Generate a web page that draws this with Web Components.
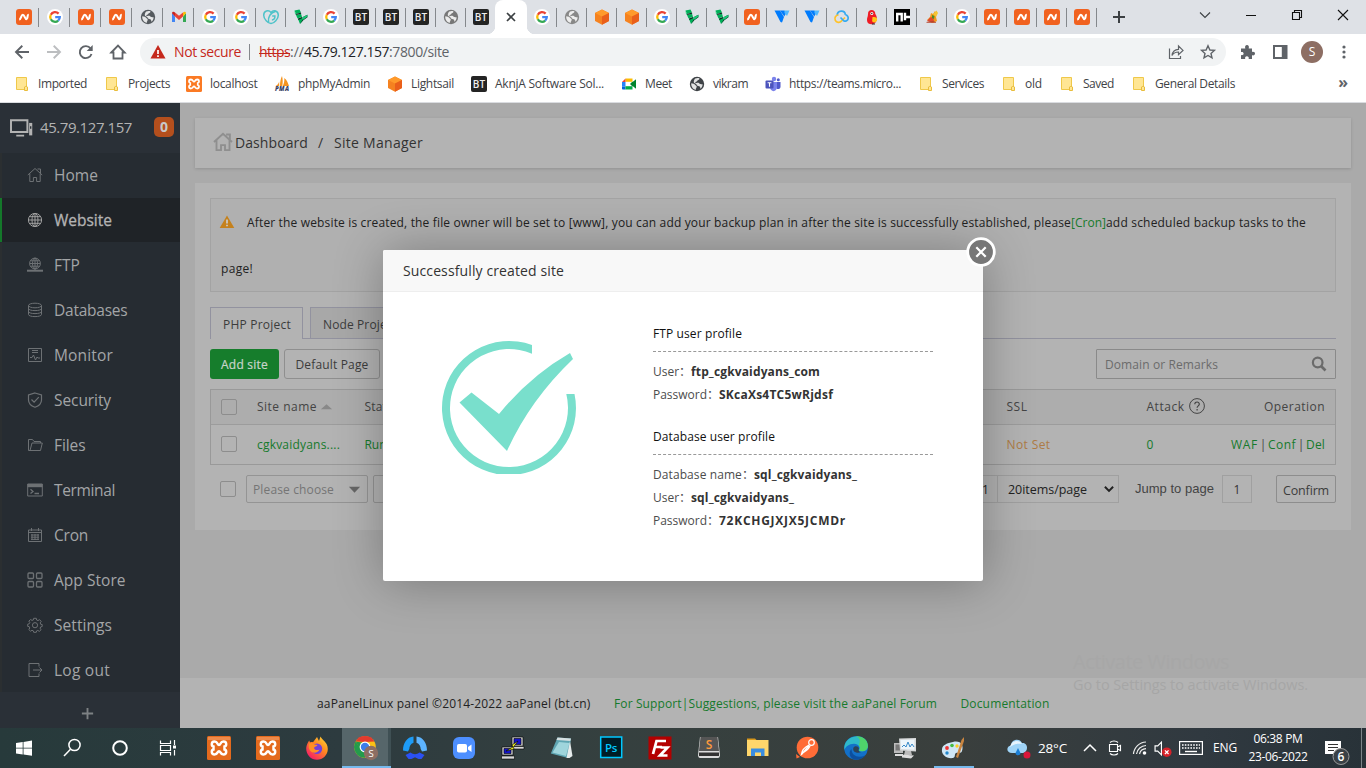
<!DOCTYPE html>
<html lang="en">
<head>
<meta charset="utf-8">
<title>aaPanel</title>
<style>
html,body{margin:0;height:768px;overflow:hidden}
body{font-family:"Open Sans","Noto Sans CJK SC",sans-serif;font-size:12px;color:#222;background:#fff}
desktop-screen{display:flex}
</style>
</head>
<body>
<desktop-screen></desktop-screen>
<script>
const ICONS = {
  ncheap:'<rect width="16" height="16" rx="3" fill="#f1611f"/><path d="M3.200 10.400C5.400 10.400 5 5.800 6.800 5.800S8.900 10.200 10.500 10.200 10.800 5.800 12.800 5.800" fill="none" stroke="#fff" stroke-width="2.100"/>',
  google:'<circle cx="8" cy="8" r="8" fill="#fff"/><g fill="none" stroke-width="2.300"><path d="M11.600 4.600A4.800 4.800 0 0 0 3.800 5.700" stroke="#ea4335"/><path d="M3.800 5.700A4.800 4.800 0 0 0 3.800 10.300" stroke="#fbbc05"/><path d="M3.800 10.300A4.800 4.800 0 0 0 11.200 11.600" stroke="#34a853"/><path d="M11.200 11.600A4.800 4.800 0 0 0 12.800 8.100H8.200" stroke="#4285f4"/></g>',
  globe:'<circle cx="8" cy="8" r="7.200" fill="currentColor"/><path d="M2.300 7.200c2 .2 3.200.5 3.800 1.600.5 1 1.700.8 1.600 2-.1 1.200-.9 1.500-1 3.100-2.700-.6-4.900-3.500-4.400-6.700zM6.200 2.600c1.800-.8 3.300-.6 4.300-.1-.2 1-.9 1.600-1.900 1.900-.8.3-.4 1.200-1.500 1.300s-1.100 1.100-.2 1.300c1.200.2 2.400-.6 3.200.3s1.500.9 3.500.9c0 2.300-1 3.700-2.200 4.600-.2-1.400-.3-2.300-1.300-2.500-1.300-.3-2.200-.6-2.600-1.700C7.100 7.500 6 7.600 5 6.700c-.6-.7 0-2.800 1.200-4.100z" fill="#fff" opacity=".85"/>',
  gmail:'<path d="M1 4v9h3V7.500z" fill="#4285f4"/><path d="M15 4v9h-3V7.500z" fill="#34a853"/><path d="M1 4.200L4 7.600V3.400C2.400 2.300 1 3 1 4.200z" fill="#c5221f"/><path d="M15 4.200L12 7.600V3.400c1.600-1.100 3-.4 3 .8z" fill="#fbbc04"/><path d="M4 3.400l4 3.300 4-3.300v4.200l-4 3.300-4-3.300z" fill="#ea4335"/>',
  godaddy:'<g fill="none" stroke="#4fc3c9" stroke-width="1.500"><path d="M8 3.500C5.500.4.700 1.800.7 6.200.7 10 5 14.300 8 14.600c3-.3 7.300-4.600 7.300-8.400C15.300 1.800 10.500.4 8 3.500z"/><path d="M12.800 2.200C7.500 3.500 4.600 8 5.600 13.300M9.200 7h2.700c.2 2.800-1.200 3.900-3 3.900"/></g>',
  linode:'<path d="M1.500 1.500l5-1 1.500 3-5 1.500zM3 6l5-1.200 1 3-4.500 1.700zM5 10l4-1.600 1 3.200L7 15z" fill="#00b159"/><path d="M3 5l5-1.400.2 1.200L3.200 6zM5 9.600L9 8l.4 1-4 2zM7 15l3-3.400 4.500-3.300-.2-2.600L10 8l-.6 3z" fill="#0c2e23"/><path d="M1.500 1.500L3 5v1L2 5zM9 8.500l5.400-2.800v2L10 11z" fill="#1cc777"/>',
  bt:'<rect width="16" height="16" rx="2" fill="#242424"/><text x="8" y="11.800" font-size="10" font-weight="600" text-anchor="middle" fill="#eee" font-family="Open Sans" textLength="12.500">BT</text>',
  cube:'<path d="M8 .5l7 3.500v8l-7 3.700L1 12V4z" fill="#f58220"/><path d="M8 .5L15 4 8 7.500 1 4z" fill="#ff9a2a"/><path d="M15 4v8l-7 3.700V7.500z" fill="#ea5f1a"/>',
  vultr:'<path d="M.5 1.500h5.500L10 8l-2 5.500-1.500-.5z" fill="#007bfc"/><path d="M6 1.500h4.500l1.700 2.400-1.900 3.600z" fill="#007bfc"/><path d="M10.500 1.500h5L13 7l-2.500-2.900z" fill="#51b9ff"/>',
  cloudlink:'<g fill="none" stroke-width="1.700"><path d="M3.200 6.500C3.200 1 10.900.8 11.400 5.800" stroke="#36aaf0"/><path d="M4.500 6A3.700 3.700 0 1 0 7.500 12L11 8.500" stroke="#ffc229"/><path d="M6.500 8.500L10 12a3.200 3.200 0 1 0 1.500-6.200" stroke="#36aaf0"/></g>',
  parrot:'<path d="M7.500 1c2.600 0 4 1.800 3.800 4 2.200 2.600 2 6.500-.2 9-2 2-7.600 2-8-2C2.600 9 4 8 4 5S5.600 1 7.500 1z" fill="#ee1c25"/><path d="M8.500 8c3-.5 5 .5 4.600 3-.5 2.500-4 3.500-5 1z" fill="#ffc417"/><circle cx="7.800" cy="4.500" r="1.500" fill="#fff"/><circle cx="7.800" cy="4.500" r=".7" fill="#222"/><path d="M8 15h3" stroke="#333"/>',
  nc:'<rect width="16" height="16" fill="#000"/><path d="M3.200 12.500V5h4.500v7.500M11 3.800v7.400M11 8h5" fill="none" stroke="#fff" stroke-width="2.400"/>',
  beach:'<path d="M3 11L6 8l1-4 2 1 2-3 1.500 3-.5 3 1 4-4 2z" fill="#f29a1c"/><path d="M9 5l3.500-3.500L14 4l-2 4z" fill="#f4c534"/><path d="M3 12l3-3.500L9 8l1 4-2 1.500z" fill="#e04a2f"/><path d="M8 6l2.500 1-.5 3L8 9z" fill="#4a8c2a"/><path d="M2 13l7-1 3 1v.8H3z" fill="#b5432c"/>',
  close:'<path d="M4 4l8 8M12 4l-8 8" stroke="currentColor" stroke-width="1.700"/>',
  plus:'<path d="M8 2v12M2 8h12" stroke="currentColor" stroke-width="2"/>',
  chev:'<path d="M3 5.500l5 5 5-5" fill="none" stroke="currentColor" stroke-width="1.100"/>',
  min:'<path d="M3 8.500h10" stroke="#111"/>',
  max:'<path d="M3.500 5.500h7v7h-7zM5.500 5.500v-2h7v7h-2" fill="none" stroke="#111" stroke-width="1.100"/>',
  wclose:'<path d="M3 3l10 10M13 3L3 13" stroke="#111" stroke-width="1.100"/>',
  back:'<path d="M15 8H2.500M8.300 1.800L2 8l6.300 6.200" fill="none" stroke="currentColor" stroke-width="1.900"/>',
  fwd:'<path d="M1 8h12.500M7.700 1.800L14 8l-6.300 6.200" fill="none" stroke="currentColor" stroke-width="1.900"/>',
  reload:'<path d="M13.500 10A6 6 0 1 1 12.600 4.500L13.500 5.700" fill="none" stroke="currentColor" stroke-width="1.900"/><path d="M14.700 1v6h-6z" fill="currentColor"/>',
  home:'<path d="M1.300 8.500L8 1.600l6.700 6.900H12.500v6h-9v-6z" fill="none" stroke="currentColor" stroke-width="1.800"/>',
  danger:'<path d="M8 1l7.500 13.500H.5z" fill="#c5281c"/><path d="M8 6v4M8 11.200v1.800" stroke="#fff" stroke-width="1.700"/>',
  share:'<path d="M1.500 4.500v10h11V12M4 11.500c.6-4 3.200-6 6.500-6.100V2L15 6.400l-4.500 4.300V8C7.500 8 5.500 9 4 11.500z" fill="none" stroke="currentColor" stroke-width="1.200"/>',
  star:'<path d="M8 1.800l1.900 4.200 4.500.4-3.400 3 1 4.400L8 11.500l-4 2.300 1-4.400-3.400-3 4.500-.4z" fill="none" stroke="currentColor" stroke-width="1.400"/>',
  puzzle:'<path d="M1 4.500h4.300C4.600 2.400 5.500 1 7 1s2.400 1.400 1.700 3.500H12v3.400c2-.5 3 .4 3 1.700s-1 2.200-3 1.700V15H8.700c.4-1.700-.4-2.700-1.800-2.700S4.800 13.300 5.200 15H1v-3.900c1.700.3 2.600-.4 2.600-1.600S2.700 7.700 1 8z" fill="currentColor"/>',
  panel:'<path d="M2 2h12.500v12H2z" fill="none" stroke="currentColor" stroke-width="2"/><path d="M9.800 2h4.700v12H9.800z" fill="currentColor"/>',
  dots:'<g fill="currentColor"><circle cx="8" cy="3" r="1.600"/><circle cx="8" cy="8" r="1.600"/><circle cx="8" cy="13" r="1.600"/></g>',
  folder:'<path d="M2.500 1.500h10v12h-10z" fill="#ffe694" stroke="#efc84a"/><path d="M10.500 11v3.500h3v-3.500c-.5-.8-2-.8-3 0z" fill="#ffe694" stroke="#e9bd3c"/>',
  xampp:'<rect width="16" height="16" rx="1.500" fill="#fb7a24"/><path d="M4.800 3.500c-2.400 0-2.300 3-.6 3.500v2c-1.700.5-1.800 3.500.6 3.500s2-2.200 3.200-2.200.8 2.200 3.200 2.200 2.300-3 .6-3.500V7c1.700-.5 1.800-3.500-.6-3.500S9.200 5.700 8 5.700 7.200 3.500 4.800 3.500z" fill="none" stroke="#fff" stroke-width="1.800"/>',
  pma:'<path d="M6 10c0-4 .5-7 2-10 .8 3 1 6 .3 10zM8.800 10c1.300-2.500 1.700-5 1.500-8 3 2 3.500 5 4.700 8zM1.500 10c2-1 3-2.500 3.700-4.500L5.200 10z" fill="#f5941f"/><text x="8" y="15" font-size="6" font-weight="800" font-style="italic" text-anchor="middle" textLength="14" fill="#3b4266" font-family="Open Sans">PMA</text>',
  meet:'<path d="M4.500 2.500h7v3.300H4.500z" fill="#fbbc04"/><path d="M4.500 2.500L1 6h3.500z" fill="#ea4335"/><path d="M1 6h3.500v4.500H1z" fill="#2684fc"/><path d="M1 10.500h3.500v3H1.800a.8.8 0 0 1-.8-.8z" fill="#0066da"/><path d="M4.500 10.200h7v3.300h-7z" fill="#00ac47"/><path d="M11 6.500l4-3.300v9.600l-4-3.300zM9 8l2.500-2.500v5z" fill="#00832d"/>',
  teams:'<circle cx="9" cy="3" r="2.200" fill="#7b83eb"/><circle cx="13.300" cy="3.800" r="1.500" fill="#5059c9"/><path d="M11 6h4.500v4.500c0 3-3 3-4 2z" fill="#5059c9"/><path d="M5 6h7v5c0 5.500-7 5.500-7 0z" fill="#7b83eb"/><rect x=".5" y="4.500" width="8" height="8" rx="1" fill="#4b53bc"/><path d="M2.600 6.800h3.800M4.500 6.800v4" stroke="#fff" stroke-width="1.100"/>',
  monitor2:'<path d="M1 2.500h12.500v9H1zM5 14.200h6" fill="none" stroke="currentColor" stroke-width="1.500" transform="translate(-.5 0)"/><path d="M14.300 4.500h2.400v9.500h-2.400z" fill="currentColor"/><path d="M15.500 7v2" stroke="#2a3036"/>',
  shome:'<path d="M.8 8L8 1.500 15.200 8M2.800 6.500V14.500h3.600v-4h3.200v4h3.600V6.500M10.500 2h3v4" fill="none" stroke="currentColor"/>',
  bhome:'<path d="M.8 8L8 1.500 15.200 8M2.800 6.500V14.500h3.600v-4h3.200v4h3.600V6.500M10.500 2h3v4" fill="none" stroke="currentColor" stroke-width="1.500"/>',
  sweb:'<g fill="none" stroke="currentColor"><circle cx="8" cy="8" r="6.600"/><ellipse cx="8" cy="8" rx="3" ry="6.600"/><path d="M1.500 8h13M8 1.400v13.200M2.500 4.700h11M2.500 11.300h11"/></g>',
  sftp:'<g fill="none" stroke="currentColor"><circle cx="8" cy="6.500" r="5.400"/><ellipse cx="8" cy="6.500" rx="2.500" ry="5.400"/><path d="M2.700 6.500h10.600M8 1v13M3.500 3.800h9M3.500 9.200h9"/><path d="M0 13.700h16" stroke-width="2"/></g>',
  sdb:'<g fill="none" stroke="currentColor"><ellipse cx="8" cy="3.500" rx="6.500" ry="2.300"/><path d="M1.500 3.500v9c0 2.800 13 2.800 13 0v-9M1.500 6.500c0 2.800 13 2.800 13 0M1.500 9.500c0 2.800 13 2.800 13 0"/></g>',
  smon:'<path d="M1.500 1.500h13v13h-13zM3 10.500h2l1.500-2.500 2 5 1.500-3 1 1h2M5 3.500h6M5 5.500h6" fill="none" stroke="currentColor"/>',
  ssec:'<path d="M8 1l6.500 2v5c0 3.500-3 6-6.500 7.300C4.500 14 1.500 11.500 1.500 8V3zM4.500 7.500l2.600 2.700 4.700-5" fill="none" stroke="currentColor" stroke-width="1.200"/>',
  sfile:'<path d="M3 13.500H1.500v-11h4l1.500 2h6.500V6M3 13.500l2-7.500h10.300l-1.800 7.500z" fill="none" stroke="currentColor"/>',
  sterm:'<path d="M.7 2h14.600v12H.7z" fill="none" stroke="currentColor"/><path d="M.5 2h15v3.200H.5z" fill="currentColor"/><path d="M3.500 7.300L6 9.500l-2.500 2M7.500 11.500H12" fill="none" stroke="currentColor" stroke-width="1.300"/>',
  scron:'<path d="M1.500 3h13v11.500h-13zM4.500 1v3M11.500 1v3M1.500 5.500h13M4 8h8M4 10.200h8M4 12.400h8M5 7v6M8 7v6M11 7v6" fill="none" stroke="currentColor"/>',
  sapp:'<g fill="none" stroke="currentColor" stroke-width="1.300"><rect x="1" y="1" width="5.500" height="5.500" rx="1"/><rect x="9.500" y="1" width="5.500" height="5.500" rx="1"/><rect x="1" y="9.500" width="5.500" height="5.500" rx="1"/><rect x="9.500" y="9.500" width="5.500" height="5.500" rx="1"/></g>',
  sset:'<g fill="none" stroke="currentColor"><path d="M6.700 1.300h2.600l.3 1.700 1.400.6 1.500-1 1.700 1.800-1 1.500.5 1.400 1.500.2v2l-1.500.4-.6 1.300 1 1.500-1.800 1.700-1.500-1-1.200.5-.3 1.400H6.700l-.3-1.400L5 13.300l-1.500.9-1.700-1.700 1-1.500-.6-1.400-1.500-.2V7.200l1.500-.4.600-1.300-1-1.400L3.600 2.500l1.400.9 1.400-.5z"/><circle cx="8" cy="8.200" r="2.600"/></g>',
  sout:'<path d="M12 4.500v-3H2v13h10v-3M6 8h9M12.500 5.500L15 8l-2.500 2.500" fill="none" stroke="currentColor"/>',
  warn:'<path d="M8 1.500l7.300 12.500H.7z" fill="#c5811c"/><path d="M8 5.500v4M8 10.700v1.600" stroke="#ccc" stroke-width="1.700"/>',
  mag:'<circle cx="6.700" cy="6.500" r="4.800" fill="none" stroke="currentColor" stroke-width="2.200"/><path d="M10 10l4.500 4.500" stroke="currentColor" stroke-width="2.600"/>',
  up:'<path d="M2 11l6-5.500 6 5.500z" fill="currentColor"/>',
  down:'<path d="M2 5h12l-6 6.500z" fill="currentColor"/>',
  bchev:'<path d="M2.500 5l5.500 5.500L13.500 5" fill="none" stroke="currentColor" stroke-width="2.600"/>',
  help:'<circle cx="8" cy="8" r="7.400" fill="none" stroke="currentColor"/><path d="M5.800 6.200c0-3 4.600-2.800 4.500 0 0 1.700-2.200 1.700-2.200 3.600M8.100 11v1.400" fill="none" stroke="currentColor" stroke-width="1.200"/>',
  win:'<path d="M4 7l6.700-1v5.700H4zM11.500 5.900L20 4.600v7.100h-8.500zM4 12.500h6.700v5.900L4 17.500zM11.500 12.500H20v7.200l-8.500-1.200z" fill="#fff"/>',
  search:'<circle cx="14.500" cy="9" r="5.600" fill="none" stroke="#fff" stroke-width="1.500"/><path d="M10.500 13.200L4 20" stroke="#fff" stroke-width="1.500"/>',
  cortana:'<circle cx="12" cy="12" r="6.800" fill="none" stroke="#fff" stroke-width="2"/>',
  tview:'<path d="M4.500 4.500v3h10v-3M4.500 19.500v-3h10v3M4.500 9.500h10v5h-10zM18.500 4v5M18.500 14v5.500" fill="none" stroke="#fff" stroke-width="1.200"/><rect x="17" y="9.500" width="3" height="3" fill="#fff"/>',
  xamppB:'<rect width="24" height="24" rx="1.500" fill="#e46a1d"/><path d="M1 1h22v3H1z" fill="#f3a06a" opacity=".6"/><path d="M7.500 5.500C4 5.500 4.200 10 6.500 10.500v3C4.200 14 4 18.500 7.500 18.500s2.700-3.300 4.500-3.300 1 3.300 4.500 3.300 3.300-4.500 1-5v-3c2.300-.5 2.500-5-1-5S13.800 9 12 9 11 5.500 7.500 5.500z" fill="none" stroke="#fff" stroke-width="2.500"/>',
  firefox:'<defs><linearGradient id="f" x1="1" y1="0" x2=".2" y2="1"><stop offset="0" stop-color="#ffe13a"/><stop offset=".45" stop-color="#ff8a1f"/><stop offset="1" stop-color="#f5156c"/></linearGradient></defs><path d="M1.200 12C1.500 9 3 6 4.200 4.500l.8 2C6 6 7 6 8 6.200L12 1l2 4 1.500-4.500C17 4 22.800 6 22.800 13c0 6-5 10.800-10.800 10.800S1 19 1.200 12z" fill="url(#f)"/><circle cx="12" cy="12.800" r="5.200" fill="#7340d8"/><path d="M4 7.500c2-1 4-.5 5.500 1l3 .5c-.5 1.500-3 1.500-3.500 3 1 2.500 3.500 2.500 5.500 1.500-1 3.500-7 4.500-9.500 1-1.500-2-1.500-4.500-1-7z" fill="#ff8f24"/>',
  chrome:'<circle cx="11" cy="11" r="10.800" fill="#fbc116"/><path d="M1.600 5.600A10.800 10.800 0 0 1 20.400 5.600L11 6z" fill="#e33b2e"/><path d="M1.600 5.600A10.800 10.800 0 0 0 11 21.800L14 15 7 13z" fill="#249a4c"/><path d="M1.600 5.600l5.400 9 1-8z" fill="#249a4c"/><circle cx="11" cy="11" r="5.400" fill="#fff"/><circle cx="11" cy="11" r="4.200" fill="#3b7de9"/><circle cx="17" cy="17" r="7.200" fill="#8d6e63"/><text x="17" y="20.500" font-size="9.500" fill="#fff" text-anchor="middle" font-family="Open Sans">S</text>',
  tri3:'<path d="M10.500.5v6.200C7.500 8 6.500 10 6.300 13L5 15.500 0 14.500C0 7 4 1 10.500.5z" fill="#1d9bf6"/><path d="M13.500.5v6.200c3 1.300 4 3.300 4.200 6.300l1.300 2.500 5-1C24 7 20 1 13.500.5z" fill="#5db4ff"/><path d="M2.500 19L7.500 16.500c3 2.300 6 2.300 9 0l5 2.500-3 4h-3l-3.500-1.700L8.500 23h-3z" fill="#2b51f5"/>',
  zoom:'<rect x="1" y="1" width="22" height="22" rx="6" fill="#4d8fff"/><rect x="5" y="8" width="10" height="8.500" rx="1.800" fill="#fff"/><path d="M16 11l3.500-2.500v7.500L16 13.600z" fill="#fff"/>',
  putty:'<g stroke="#000" stroke-width=".6"><path d="M11 1h11v9H11z" fill="#ccc"/><path d="M13 2.500h7v6h-7z" fill="#1414c8"/><path d="M11 10.500h12v2.500H11z" fill="#d8d8d8"/><path d="M1 11h11v8H1z" fill="#ccc"/><path d="M3 12.500h7v5H3z" fill="#1414c8"/><path d="M.5 20h13v3H.5z" fill="#d8d8d8"/><path d="M17 5l-6 4 1 2-7 4 8-2-.5-2z" fill="#ff2"/></g>',
  notepad:'<path d="M7.500 1.500L21 2.500 18 22 .8 17.500z" fill="#5fa5b2"/><path d="M7.500 1.500L21 2.500l-.6 2.500L6.500 4z" fill="#d6dfe0"/><path d="M2.500 16.500L9 6l10.500 1L16 20z" fill="#9fd5dc"/><path d="M16.500 22l3.500-17 2.500 15-3 2z" fill="#e6ecec"/>',
  ps:'<g transform="translate(.7 0)"><rect x="1" y="1" width="21" height="20.500" fill="#001d26" stroke="#00c8ff" stroke-width="1.500"/><text x="11.500" y="15.500" font-size="11.500" text-anchor="middle" textLength="12.500" fill="#00c8ff" font-family="Open Sans" font-weight="600">Ps</text></g>',
  fz:'<rect x=".5" y=".5" width="23" height="23" fill="#b30000"/><path d="M5 18L8.500 5H18M7 11h7M12.500 11.500h7L12 19.500h7.500" fill="none" stroke="#fff" stroke-width="2.700"/>',
  sublime:'<path d="M3 1h18l2 18c0 2-1 3-2 3H3c-1 0-2-1-2-3z" fill="#dcdcdc"/><path d="M3.500 1h17l1.500 14H2z" fill="#555"/><path d="M2 16.500h20V20H2z" fill="#333"/><text x="12" y="12.500" font-size="12" font-weight="600" text-anchor="middle" fill="#ff9a3c" font-family="Open Sans">S</text>',
  explorer:'<path d="M1 2.500h8l2 2H1z" fill="#d9981b"/><path d="M1 4h21.500v16H1z" fill="#ffd66b"/><path d="M5 12.500h13.500V20h-3.500v-3.500H9V20H5z" fill="#3a8de0"/>',
  postman:'<circle cx="12.500" cy="11.500" r="10.800" fill="#ff6c37"/><circle cx="16.500" cy="6.500" r="2.800" fill="none" stroke="#fff" stroke-width="1.200"/><path d="M14 9c-4 2-7 5-7.500 9 1.500-2 4-2.500 6-4.500s2-3.500 3-4M6.500 18.500L14 9.500" fill="none" stroke="#fff" stroke-width="1.300"/><path d="M1 18l4 3-3.500 1.500z" fill="#ff6c37"/>',
  edge:'<circle cx="12" cy="12" r="11.800" fill="#1370c8"/><path d="M.3 11C2-3 24-3.500 23.800 10c0 5-6 6.500-9 4.500 2-3 0-7-5-6.800C5 8 1.500 10.500.3 14z" fill="#2fb9c9"/><path d="M12 .2c7 0 12 4 11.800 10 0 5-6 6-9 4.300 2-2 1.500-4 0-5.500 2-4 1-7-2.800-8.800z" fill="#4fd36b"/><path d="M7.500 13c0 7 7 9.500 13.500 6.500-5 6.500-13.500 5-15 0-1-3 .2-5.500 1.500-6.500z" fill="#0c4f9e"/><path d="M9.500 11.500c1.500-2 5-1.500 5.500 1-1 2-.5 3 2 3.800-5 1.500-9-1-7.500-4.800z" fill="#2d4256"/>',
  perf:'<path d="M1 7h9v10H1z" fill="#bbb"/><path d="M2.500 8.500h5v6h-5z" fill="#777"/><path d="M6 2.500L23 2v13.500l-16-1z" fill="#d8dadb"/><path d="M7.500 4l14-.4v10.200l-13.500-.8z" fill="#eef6fb"/><path d="M9 11l2-2 2 2 2-5 2 5 2-3 2 3" fill="none" stroke="#3a8bc9"/><path d="M12 15h6l1 4h-8z" fill="#bbb"/><path d="M9 18.500l12 1-3 3-9-1zM2 18h8v2H2z" fill="#ddd"/>',
  paint:'<path d="M12 6c8-2 11 4 9 9-1 3-4 1-6 2s0 4-3 5C6 23 0 19 1 13c.6-4 5-6 11-7z" fill="#cfe6f5"/><circle cx="6" cy="12" r="1.900" fill="#e33"/><circle cx="11" cy="9.500" r="1.800" fill="#4b4"/><circle cx="16" cy="10" r="1.700" fill="#fc2"/><circle cx="6" cy="17" r="1.700" fill="#28c"/><path d="M15 21L20.500 4 23 1l0 4-6 17z" fill="#c98540"/>',
  cloud:'<path d="M5 17c-6 0-6-7-1-7.500C4 3 13 1.500 15 7c6-1 7 9 1 10z" fill="#9fd4f7"/><path d="M3 11C4 4 13 3 15 8c-4-1-8 0-12 3z" fill="#e7f4fd"/><path d="M11 12l2.500 5c0 3-5 3-5 0z" fill="#1b7fd6"/><circle cx="20" cy="19" r="3.500" fill="#d9163a"/>',
  caret:'<path d="M2 11l6-6 6 6" fill="none" stroke="#fff" stroke-width="1.500"/>',
  cam:'<path d="M2.500 4.500h8v7h-8zM10.500 7l3-1.500v5l-3-1.500M3 2.500C5 .5 9 .5 11 2.500M3 13.500c2 2 6 2 8 0" fill="none" stroke="#fff" stroke-width="1.100"/>',
  wifi:'<g fill="none" stroke="#eee" stroke-width="1.200"><path d="M1.500 14A13 13 0 0 1 14 2M4.500 14A10 10 0 0 1 14 5.500M7.500 14A7 7 0 0 1 14 8.700"/></g><circle cx="12.500" cy="13" r="1.800" fill="#fff"/>',
  vol:'<path d="M1 5.500h2.500L7 2v12L3.500 10.500H1z" fill="none" stroke="#fff" stroke-width="1.100"/><circle cx="12" cy="11.500" r="4.500" fill="#d8222a"/><path d="M10.300 9.800l3.400 3.400M13.700 9.800l-3.400 3.400" stroke="#fff" stroke-width="1.200"/>',
  kbd:'<rect x=".6" y="1.600" width="22.800" height="12.800" fill="none" stroke="#fff" stroke-width="1.200"/><path d="M3 5h18M3 8h18" stroke="#fff" stroke-width="1.400" stroke-dasharray="1.600 1.200"/><path d="M6 11.500h12" stroke="#fff" stroke-width="1.400"/>',
  notif:'<path d="M1 2h16v13h-5l-3 3v-3H1z" fill="#fff"/><path d="M4 5.500h10M4 8.500h10M4 11.500h6" stroke="#333"/><circle cx="17" cy="17.500" r="8" fill="#3a4146" stroke="#9a9a9a"/><text x="17" y="21.800" font-size="12" font-weight="600" text-anchor="middle" fill="#fff" font-family="Open Sans">6</text>',
};
const WIDE = {kbd:'0 0 24 16',monitor2:'0 0 17 16'};
const BIG = new Set(['win','search','cortana','tview','xamppB','firefox','chrome','tri3','zoom','putty','notepad','ps','fz','sublime','explorer','postman','edge','perf','paint','cloud']);

const el = (name, html) => customElements.define(name, class extends HTMLElement {
  constructor(){ super(); this.attachShadow({mode:'open'}); }
  connectedCallback(){ if(!this.shadowRoot.firstChild) this.shadowRoot.innerHTML = typeof html==='function'?html(this):html; }
});

el('ui-icon', h => {
  const n=h.getAttribute('n'), s=h.getAttribute('s')||16, w=h.getAttribute('w')||s;
  const vb = n==='notif'?'0 0 26 26':WIDE[n]||(BIG.has(n)?'0 0 24 24':'0 0 16 16');
  return `<style>:host{display:inline-flex;flex:none;width:${w}px;height:${s}px}svg{display:block;width:100%;height:100%;overflow:visible}</style><svg viewBox="${vb}">${ICONS[n]||''}</svg>`;
});

el('desktop-screen', `<style>:host{flex-direction:column;width:1366px;height:768px;overflow:hidden}</style>
<browser-tabs></browser-tabs><browser-toolbar></browser-toolbar><bookmark-bar></bookmark-bar><panel-app></panel-app><task-bar></task-bar>`);

const TABS=['ncheap','google','ncheap','ncheap','globe','gmail','google','google','godaddy','linode','google','bt','bt','bt','globe:#777','bt','*','google','globe:#888','cube','cube','google','linode','linode','ncheap','vultr','vultr','cloudlink','parrot','nc','beach','google','ncheap','ncheap','ncheap','ncheap'];
el('browser-tabs', () => `<style>:host{display:flex;height:34px;background:#dee1e6;padding-left:8px;box-sizing:border-box;flex:none;color:#3c4043}
.t{width:30px;height:34px;box-sizing:border-box;display:flex;align-items:center;justify-content:center;position:relative;color:#555a5f}
.w{width:31px}.t:not(.a):not(.n)::after{content:"";position:absolute;right:0;top:8px;height:19px;width:1px;background:#85888c}
.a{width:32px;margin-left:-1px;background:#fff;border-radius:8px 8px 0 0;color:#3c4043}
.a::before,.a::after{content:"";position:absolute;bottom:0;width:8px;height:8px}
.a::before{left:-8px;background:radial-gradient(circle at 0 0,transparent 8px,#fff 8.500px)}
.a::after{right:-8px;background:radial-gradient(circle at 100% 0,transparent 8px,#fff 8.500px)}
.p{margin-left:14px;width:16px;display:flex;align-items:center}.c{margin-left:auto;display:flex;gap:30px;padding:6px 15px 0 0;height:17px;align-items:center}</style>`+
TABS.map((t,i)=>{const[n,c]=t.split(':');return t==='*'?'<div class="t a"><ui-icon n="close" s="16"></ui-icon></div>':`<div class="t ${i<8?'w':''} ${i===15?'n':''}" ${c?`style="color:${c}"`:''}><ui-icon n="${n}"></ui-icon></div>`}).join('')+
`<div class="p"><ui-icon n="plus" s="16"></ui-icon></div><div class="c"><ui-icon n="chev"></ui-icon><ui-icon n="min"></ui-icon><ui-icon n="max"></ui-icon><ui-icon n="wclose"></ui-icon></div>`);

el('browser-toolbar', `<style>:host{display:flex;height:36px;flex:none;align-items:center;background:#fff;color:#5f6368;padding-left:14px;box-sizing:border-box;font-size:14px}
.nav{display:flex;gap:16px;width:126px}.box{width:1086px;height:28px;border-radius:14px;background:#f1f3f4;display:flex;align-items:center;box-sizing:border-box;padding:0 10px}
fit-text{padding-bottom:1px}.r{color:#c5281c}.ns{margin:0 8px 0 8px}.sep{width:1px;height:16px;background:#85888c;margin-right:9px}.d{color:#202124}.f{margin-left:auto;display:flex;gap:16px}
.s{background:linear-gradient(#c5281c,#c5281c) 0 11px/100% 1px no-repeat}.e{display:flex;gap:16px;margin-left:14px;align-items:center}.av{width:22px;height:22px;border-radius:50%;background:#8d6e63;color:#fff;font-size:12px;line-height:21px;text-align:center;margin:0 -3px}</style>
<div class="nav"><ui-icon n="back"></ui-icon><ui-icon n="fwd" style="color:#bcbec0"></ui-icon><ui-icon n="reload"></ui-icon><ui-icon n="home"></ui-icon></div>
<div class="box"><ui-icon n="danger"></ui-icon><fit-text class="r ns" w="67">Not secure</fit-text><i class="sep"></i><fit-text class="r s" w="31">https</fit-text><fit-text w="14">://</fit-text><fit-text class="d" w="85">45.79.127.157</fit-text><fit-text w="60">:7800/site</fit-text>
<div class="f"><ui-icon n="share"></ui-icon><ui-icon n="star"></ui-icon></div></div>
<div class="e"><ui-icon n="puzzle"></ui-icon><ui-icon n="panel"></ui-icon><div class="av">S</div><ui-icon n="dots"></ui-icon></div>`);

const BM=[['folder','Imported',49,90],['folder','Projects',42,82],['xampp','localhost',47.500,88],['pma','phpMyAdmin',72,113],['cube','Lightsail',43,84],['bt','AknjA Software Sol...',109,150],['meet','Meet',27,68],['globe','vikram',35,76],['teams','https://teams.micro...',112,153],['folder','Services',42,83],['folder','old',17,58],['folder','Saved',31,72],['folder','General Details',80,100]];
el('bookmark-bar', () => `<style>:host{display:flex;height:33px;flex:none;box-sizing:border-box;border-bottom:1px solid #dadce0;background:#fff;padding:0 14px 4px;align-items:center;font-size:12px}
div{display:flex;gap:8px;align-items:center;color:#3f4347}fit-text{padding-bottom:1px}b{margin-left:auto;font:bold 16px "Open Sans";color:#5f6368;padding:0 4px 4px 0}</style>`+
BM.map(b=>`<div style="width:${b[3]}px"><ui-icon n="${b[0]}"></ui-icon><fit-text w="${b[2]}">${b[1]}</fit-text></div>`).join('')+`<b>»</b>`);

el('panel-app', `<style>:host{display:flex;height:625px;flex:none;position:relative;background:#aaa;overflow:hidden}
success-dialog{position:absolute;left:383px;top:147px}.wm{position:absolute;left:1073px;top:546px;color:#a6a6a6;font-size:14.500px;line-height:22px;display:flex;flex-direction:column}
.wm fit-text:first-child{font-size:20px;line-height:25px;color:#a7a7a7}</style>
<side-menu></side-menu><site-page></site-page><div class="wm"><fit-text w="156">Activate Windows</fit-text><fit-text w="235">Go to Settings to activate Windows.</fit-text></div><success-dialog></success-dialog>`);

const MENU=[['shome','Home',44],['sweb','Website',58],['sftp','FTP',26],['sdb','Databases',73.500],['smon','Monitor',59],['ssec','Security',57],['sfile','Files',31.500],['sterm','Terminal',61],['scron','Cron',34],['sapp','App Store',71.500],['sset','Settings',58],['sout','Log out',56]];
el('side-menu', () => `<style>:host{display:flex;flex-direction:column;width:180px;height:625px;flex:none;background:#262c32;color:#a3a5a7;font-size:15.500px}
.h{height:50px;background:#2a3037;display:flex;align-items:center;box-sizing:border-box;padding:0 6px 2px 10px;color:#b3b3b3}.h fit-text{margin-left:7px;font-size:15px}
.h b{margin-left:auto;width:20px;height:20px;border-radius:5px;background:#b44f1d;color:#c9c9c9;font-size:14px;line-height:19px;text-align:center}
.i{height:45px;display:flex;align-items:center;gap:11px;padding-left:25px;border-left:2px solid #2b2f31;box-sizing:border-box}
.i ui-icon{color:#6d7174;margin-top:-1px}.i fit-text{padding-bottom:2px}.a{background:#1f2327;border-color:#14782a;color:#b3b3b3;height:44px;margin-bottom:1px}.a fit-text{-webkit-text-stroke:.3px;padding:0}.a ui-icon{color:#a0a0a0}
.p{flex:1;background:#2a3037;display:flex;align-items:center;padding:6px 0 0 80px;color:#7d8184;margin-top:-1px}</style>
<div class="h"><ui-icon n="monitor2" s="21" w="23"></ui-icon><fit-text w="92">45.79.127.157</fit-text><b>0</b></div>`+
MENU.map((m,i)=>`<div class="i ${i===1?'a':''}"><ui-icon n="${m[0]}"></ui-icon><fit-text w="${m[2]}">${m[1]}</fit-text></div>`).join('')+`<div class="p"><ui-icon n="plus" s="15"></ui-icon></div>`);

el('site-page', `<style>:host{display:flex;flex-direction:column;width:1186px;height:625px;color:#3c3c3c;font-size:12px}
.card{background:#b3b3b3;margin:15px 15px 0;box-sizing:border-box}
.bc{height:50px;display:flex;align-items:center;padding:0 18px 2px;font-size:14px;box-shadow:0 1px 3px rgba(0,0,0,.15);color:#333}.bc ui-icon{color:#8f8f8f;margin-right:2px}
.main{height:347px;padding:15px}.al{height:94px;border:1px solid #a3a3a3;background:#b0b0b0;box-sizing:border-box;padding:1px 10px;line-height:46px;color:#222}
.al div{display:flex;height:46px;align-items:center}.al ui-icon{margin:-2px 12px 0 -2px}.g{color:#167a2c}
.tabs{display:flex;height:32px;margin-top:15px}.tabs div{border:1px solid #92929f;box-sizing:border-box;padding-left:12px;line-height:33px;margin-right:7px}
.t1{width:93px;border-bottom:0!important;margin:0!important}.t2{width:94px;background:#a8a8a8}.ln{width:7px;margin:0;border-bottom:1px solid #92929f}.fill{flex:1;border-bottom:1px solid #92929f;margin-left:-7px}
.btns{display:flex;height:30px;margin-top:10px}.btns>*{box-sizing:border-box;border-radius:3px;display:flex;align-items:center}
.add{width:69px;background:#167d2c;color:#c8d4ca;justify-content:center;margin-right:5px;-webkit-text-stroke:.2px}.def{width:96px;border:1px solid #8f8f8f;justify-content:center}
.se{width:240px;margin-left:auto;border:1px solid #8a8a8a;padding:0 8px;justify-content:space-between;color:#6b6b6b;border-radius:1px!important}
.tb{border:1px solid #999;margin-top:10px;height:76px;box-sizing:border-box}.r{display:grid;grid-template-columns:46px 107.500px 642px 140px 75.500px 1fr;height:38px;align-items:center;color:#444;font-size:12px}
.hd{height:34px;background:#adadad;border-bottom:1px solid #9c9c9c;color:#444}.hd fit-text{padding-bottom:1px}.cb{display:block;width:16px;height:16px;border:1px solid #8d8d8d;border-radius:2px;margin:-1px 0 0 10px;box-sizing:border-box}
.f{display:flex;align-items:center}.op{justify-content:flex-end;padding-right:10px}.op span{width:10px;text-align:center}
.pg{display:flex;height:28px;margin-top:10px;align-items:center}.pg>div{height:28px;box-sizing:border-box;display:flex;align-items:center}
.s1{width:122px;border:1px solid #949494;border-radius:2px;margin-left:10px;padding:0 5px 0 6px;justify-content:space-between;color:#757575}.s2{width:20px;border:1px solid #949494;border-radius:2px;margin-left:5px}
.pn{margin-left:auto;width:26px;border:1px solid #a0a0a0;padding-left:9px;color:#222}.s3{width:121px;border:1px solid #a0a0a0;border-left:0;padding:0 1px 0 10px;justify-content:space-between;color:#222;font-size:12.500px}
.jp{font:13px "Liberation Sans";margin:0 8px 0 16px;color:#444;padding-bottom:1px}.in{width:30px;border:1px solid #a0a0a0;justify-content:center;color:#333}.cf{width:60px;border:1px solid #8d8d8d;border-radius:2px;justify-content:center;margin-left:24px;padding-top:2px;font-size:12.500px}
.ft{margin-top:auto;height:50px;background:#b3b3b3;display:flex;align-items:center;padding-left:137px;gap:23.500px;color:#222;box-sizing:border-box;padding-top:1px}</style>
<div class="card bc"><ui-icon n="bhome" s="20"></ui-icon><fit-text w="73">Dashboard</fit-text><fit-text w="6" style="margin:0 10px">/</fit-text><fit-text w="89">Site Manager</fit-text></div>
<div class="card main">
<div class="al"><div><ui-icon n="warn"></ui-icon><fit-text w="824">After the website is created, the file owner will be set to [www], you can add your backup plan in after the site is successfully established, please</fit-text><fit-text class="g" w="35">[Cron]</fit-text><fit-text w="200">add scheduled backup tasks to the</fit-text></div><div><fit-text w="32">page!</fit-text></div></div>
<div class="tabs"><div class="t1"><fit-text w="68">PHP Project</fit-text></div><span class="ln"></span><div class="t2"><fit-text w="74">Node Project</fit-text></div><span class="fill"></span></div>
<div class="btns"><div class="add"><fit-text w="47">Add site</fit-text></div><div class="def"><fit-text w="73">Default Page</fit-text></div><div class="se"><fit-text w="113">Domain or Remarks</fit-text><ui-icon n="mag"></ui-icon></div></div>
<div class="tb"><div class="r hd"><i class="cb"></i><div class="f"><fit-text w="60">Site name</fit-text><ui-icon n="up" s="15" style="color:#888;margin:-2px 0 0 2px"></ui-icon></div><fit-text w="36">Status</fit-text><fit-text w="21">SSL</fit-text><div class="f"><fit-text w="38">Attack</fit-text><ui-icon n="help" style="margin:-2px 0 0 4px"></ui-icon></div><div class="f op"><fit-text w="61">Operation</fit-text></div></div>
<div class="r"><i class="cb"></i><fit-text class="g" w="83">cgkvaidyans....</fit-text><fit-text class="g" w="46">Running</fit-text><fit-text w="44" style="color:#ae7b45">Not Set</fit-text><fit-text class="g">0</fit-text><div class="f op"><fit-text class="g" w="27">WAF</fit-text><span>|</span><fit-text class="g" w="28">Conf</fit-text><span>|</span><fit-text class="g" w="19">Del</fit-text></div></div></div>
<div class="pg"><i class="cb"></i><div class="s1"><fit-text w="81">Please choose</fit-text><ui-icon n="down" s="15" style="color:#666"></ui-icon></div><div class="s2"></div><div class="pn">1</div><div class="s3"><fit-text w="79">20items/page</fit-text><ui-icon n="bchev" s="12" style="margin-right:2px"></ui-icon></div><fit-text class="jp" w="79">Jump to page</fit-text><div class="in">1</div><div class="cf"><fit-text w="46">Confirm</fit-text></div></div>
</div>
<div class="ft"><fit-text w="273.500">aaPanelLinux panel ©2014-2022 aaPanel (bt.cn)</fit-text><fit-text class="g" w="323">For Support|Suggestions, please visit the aaPanel Forum</fit-text><fit-text class="g" w="89">Documentation</fit-text></div>`);

el('account-row', h=>`<style>:host{display:flex;height:23px;line-height:23px;color:#4c4c4c}</style><fit-text w="${h.getAttribute('l')}">${h.getAttribute('label')}</fit-text><fit-text w="${h.getAttribute('v')}" bold><slot></slot></fit-text>`);
el('account-group', `<style>:host{display:block}.t{height:34px;line-height:32px;border-bottom:1px dashed #999;margin-bottom:8px;color:#111;box-sizing:border-box;padding-bottom:1px}div+slot{display:block;margin-bottom:15px}</style><div class="t"><slot name="title"></slot></div><slot></slot>`);
el('success-dialog', `<style>:host{display:flex;flex-direction:column;width:600px;height:331px;background:#fff;border-radius:2px;box-shadow:1px 1px 50px rgba(0,0,0,.3);font-size:12px}
.h{height:42px;box-sizing:border-box;border-bottom:1px solid #eee;background:#f8f8f8;padding:0 20px;line-height:41.500px;font-size:14px;color:#333;border-radius:2px 2px 0 0}
.b{display:grid;grid-template-columns:270px 280px;padding-top:26px}.ck{margin:23px 0 0 58px;width:136px;height:133px;display:block}
.x{position:absolute;left:583px;top:-13px}</style>
<div class="h"><fit-text w="161">Successfully created site</fit-text></div>
<div class="b"><svg class="ck" viewBox="441 341 136 133"><path d="M532 345.100A67 67 0 1 0 574.500 394H566.300A59 59 0 1 1 532 353.700z" fill="#79dfcc"/><path d="M459.500 402.500L471.500 392.500 499 414Q530 376 570 353L573 359Q530 400 507 451z" fill="#79dfcc"/></svg>
<div><account-group><fit-text slot="title" w="89">FTP user profile</fit-text><account-row label="User：" l="38" v="129">ftp_cgkvaidyans_com</account-row><account-row label="Password：" l="66" v="114">SKcaXs4TC5wRjdsf</account-row></account-group>
<account-group><fit-text slot="title" w="122">Database user profile</fit-text><account-row label="Database name：" l="101" v="103">sql_cgkvaidyans_</account-row><account-row label="User：" l="38" v="103">sql_cgkvaidyans_</account-row><account-row label="Password：" l="66" v="127">72KCHGJXJX5JCMDr</account-row></account-group></div></div>
<svg class="x" width="30" height="30"><circle cx="15" cy="15" r="13.300" fill="#777" stroke="#fff" stroke-width="2.800"/><path d="M10.300 10.300l9.400 9.400M19.700 10.300l-9.400 9.400" stroke="#fff" stroke-width="2.200"/></svg>`);

const APPS=['xamppB','xamppB','firefox','chrome','tri3','zoom','putty','notepad','ps','fz','sublime','explorer','postman','edge','perf','paint'];
el('task-bar', ()=>`<style>:host{display:flex;height:40px;flex:none;color:#fff;font-size:12px;background:linear-gradient(90deg,#273a3b,#2d3b3f 25%,#35403f 45%,#3a3f3d 70%,#303940 88%,#283238)}
.s{width:48px;display:flex;align-items:center;justify-content:center}.sp{width:2.500px}.a{width:49px;display:flex;align-items:center;justify-content:center;box-sizing:border-box;padding-right:1px}
.on{background:#56666a;border-bottom:2px solid #76b9ed;padding-top:2px;box-shadow:inset -3px 0 #3f5054}.un{border-bottom:2px solid #76b9ed;padding-top:2px;width:40px;margin:0 5px 0 4px}
.tr{display:flex;align-items:center;margin-left:auto;font-size:13px}.ck{width:60px;text-align:center;display:flex;flex-direction:column;align-items:center;line-height:18px;font-size:12px}.end{width:1px;height:40px;background:#7b8488;margin-right:4px}</style>`+
['win','search','cortana','tview'].map(n=>`<div class="s"><ui-icon n="${n}" s="24"></ui-icon></div>`).join('')+'<div class="sp"></div>'+
APPS.map(n=>`<div class="a ${n==='chrome'?'on':n==='paint'?'un':''}"><ui-icon n="${n}" s="24"></ui-icon></div>`).join('')+
`<div class="tr"><ui-icon n="cloud" s="24" style="margin-right:7px"></ui-icon><fit-text w="29" style="font-size:13.500px">28°C</fit-text><ui-icon n="caret" style="margin:0 9px 0 15px"></ui-icon><ui-icon n="cam" style="margin-right:9px"></ui-icon><ui-icon n="wifi" style="margin-right:6px"></ui-icon><ui-icon n="vol" s="17" style="margin-right:8px"></ui-icon><ui-icon n="kbd" s="16" w="24" style="margin-right:10px"></ui-icon><fit-text w="24" style="margin-right:11px;font-size:12px;padding-bottom:2px">ENG</fit-text><div class="ck"><fit-text w="49">06:38 PM</fit-text><fit-text w="59">23-06-2022</fit-text></div><ui-icon n="notif" s="26" style="margin:8px 11px 0 16px"></ui-icon><i class="end"></i></div>`);

/* Single-line label that tracks its text to the width given by the w attribute. */
customElements.define('fit-text', class extends HTMLElement {
  constructor(){ super(); this.attachShadow({mode:'open'});
    this.shadowRoot.innerHTML='<style>:host{display:inline-block;white-space:pre;flex:none}:host([bold]){font-weight:700;color:#333}span{display:inline-block}</style><span><slot></slot></span>'; }
  connectedCallback(){
    const w=parseFloat(this.getAttribute('w')); if(!w) return;
    const s=this.shadowRoot.querySelector('span');
    let t=this.textContent; const sl=this.querySelector('slot'); if(sl) t=sl.assignedNodes().map(n=>n.textContent).join('');
    const n=s.getBoundingClientRect().width;
    s.style.letterSpacing=((w-n)/t.length).toFixed(3)+'px';
    this.style.width=w+'px';
  }
});
</script>
</body>
</html>
